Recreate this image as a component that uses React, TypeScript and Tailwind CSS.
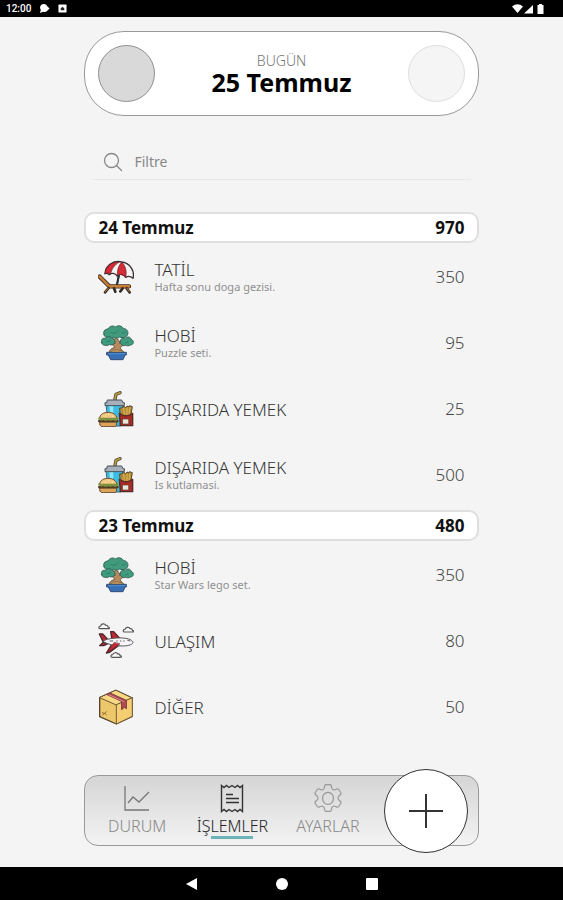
import React, { useState } from "react";

type IconName = "beach" | "bonsai" | "food" | "plane" | "box";

function BeachIcon() {
  return (
    <svg viewBox="0 0 108 108" className="size-9" strokeLinejoin="round" strokeLinecap="round" aria-hidden="true">
      <path d="M71 12 57 76" stroke="#263040" strokeWidth="5" />
      <path d="M21 44C22 18 48 3 72 9c24 3 39 27 33 49-8-7-15-8-22-3-6-9-16-12-25-4-7-9-17-10-24-4-6-5-10-5-13-3Z" fill="#f3f3f4" stroke="#3a3034" strokeWidth="4" />
      <path d="M21 44C22 22 42 8 64 9 50 17 40 31 38 45c-7-4-12-4-17-1Z" fill="#d62b35" stroke="#59222a" strokeWidth="2" />
      <path d="M58 51C57 32 62 18 72 9c11 13 15 28 11 46-6-9-16-12-25-4Z" fill="#d62b35" stroke="#59222a" strokeWidth="2" />
      <path d="M62 52 57 77" stroke="#26303a" strokeWidth="6" />
      <path d="M5 53 34 82h59" fill="none" stroke="#402c20" strokeWidth="13" />
      <path d="M5 53 34 82h59" fill="none" stroke="#c87d35" strokeWidth="8" />
      <path d="m32 87-11 13m65-12 9 12M48 88l4 10m22-10-7 9" fill="none" stroke="#352a22" strokeWidth="8" />
      <path d="m32 87-10 11m65-10 7 9" fill="none" stroke="#c87d35" strokeWidth="3" />
    </svg>
  );
}

function BonsaiIcon() {
  return (
    <svg viewBox="0 0 108 108" className="size-9" strokeLinejoin="round" strokeLinecap="round" aria-hidden="true">
      <path d="M33 43c1 16 14 14 17 24-11 4-18 10-16 18h43c0-8-11-12-10-17 4-7 15-8 20-17l-7-4c-5 6-10 6-15 9 0-8-4-12-9-16l-9 3 5 12c-6-2-8-6-10-13Z" fill="#b8895d" stroke="#66564c" strokeWidth="3" />
      <path d="M36 85c5-13 14-9 20-12 9 5 21 2 25 12Z" fill="#c99b58" stroke="#735d3f" strokeWidth="2" />
      <path d="M18 28c-4-11 6-17 13-16 2-8 14-12 21-6 8-6 21-4 24 5 14-1 18 16 9 23-6 6-16 4-20 2-6 5-13 4-17 0-7 5-15 5-18 0-5 3-12-1-12-8Z" fill="#3f9b7c" stroke="#37645a" strokeWidth="3" />
      <path d="M11 53c-4-9 5-16 11-12 4-8 16-8 20-1 9 0 13 14 4 18-6 4-10 0-13 1-6 4-22 3-22-6ZM67 50c0-10 9-14 14-9 5-8 17-6 18 2 10 3 9 17-2 17-5 4-10 2-14 1-8 3-16-2-16-11Z" fill="#3f9b7c" stroke="#37645a" strokeWidth="3" />
      <path d="M40 23c8 5 15 0 20-5m12 6c5 1 9-1 11-5M27 50c5 1 9-1 10-4m46 8c4 0 6-2 7-4" fill="none" stroke="#327c67" strokeWidth="3" />
      <path d="M27 82h58v8h-4l-6 14H38l-7-14h-4Z" fill="#3570b5" stroke="#344e76" strokeWidth="3" />
      <path d="M32 86h49" stroke="#5591cc" strokeWidth="3" />
    </svg>
  );
}

function FoodIcon() {
  return (
    <svg viewBox="0 0 108 108" className="size-9" strokeLinejoin="round" strokeLinecap="round" aria-hidden="true">
      <path d="m51 25 3-15 12-5" fill="none" stroke="#534b32" strokeWidth="10" />
      <path d="m51 25 3-15 12-5" fill="none" stroke="#bf9b45" strokeWidth="5" />
      <path d="M25 40h51l-8 65H33Z" fill="#39bde5" stroke="#356375" strokeWidth="3" />
      <path d="M34 43h12v26H36Z" fill="#8fe5f5" />
      <path d="M29 27h42l4 8h4v9H21v-9h4Z" fill="#a7b0ba" stroke="#485158" strokeWidth="3" />
      <path d="M66 51h6l2-4h6l3 4 4-6 6 3 1-4 9 3-5 29H68Z" fill="#b58a38" stroke="#59462c" strokeWidth="3" />
      <path d="m77 52 2 19m8-20v20m9-21-3 20" stroke="#e0b857" strokeWidth="3" />
      <path d="M64 67c12 10 28 10 40 0v37H67Z" fill="#a92b23" stroke="#542c28" strokeWidth="4" />
      <path d="M74 84h18v15H74Z" fill="#e8e7dc" stroke="#654035" strokeWidth="2" />
      <path d="M5 81c0-23 51-23 51 0Z" fill="#f2c780" stroke="#654b31" strokeWidth="3" />
      <path d="M5 93h51v6c0 8-7 8-11 8H16c-6 0-11-2-11-8Z" fill="#dba45a" stroke="#654b31" strokeWidth="3" />
      <path d="M4 90h54" stroke="#563b24" strokeWidth="8" />
      <path d="M4 82c7 8 9-1 15 2 7 6 8-2 14 0 7 5 9-2 14 0 4 4 8 1 11-2" fill="none" stroke="#7b973f" strokeWidth="7" />
      <path d="M22 75h1m9-4h1m10 5h1" stroke="#fff3c8" strokeWidth="3" />
    </svg>
  );
}

function PlaneIcon() {
  return (
    <svg viewBox="0 0 108 108" className="size-9" strokeLinejoin="round" strokeLinecap="round" aria-hidden="true">
      <g fill="#f8f8f8" stroke="#555" strokeWidth="3.5">
        <path d="M7 17c-6 0-6-8 1-8 1-7 12-9 15-2 6-1 7 3 7 5 6 1 6 5 1 5Z" />
        <path d="M80 27c-6 0-6-8 1-8 2-7 13-8 15-2 6-1 7 3 7 5 6 1 6 5 1 5Z" />
        <path d="M43 103c-6 0-6-8 1-8 2-7 13-8 15-2 6-1 7 3 7 5 6 1 6 5 1 5Z" />
      </g>
      <path d="M42 50 38 26h9l24 26ZM43 62 25 90l10-2 32-24Z" fill="#bf2731" stroke="#48262a" strokeWidth="4" />
      <path d="M15 55 4 33h10l16 17ZM16 58 5 68h12l14-7Z" fill="#bf2731" stroke="#48262a" strokeWidth="4" />
      <path d="M14 55c13-11 61-13 78-7 7 2 12 6 13 10-2 9-20 11-33 11-23 0-43-5-58-14Z" fill="#f7f7f7" stroke="#55555a" strokeWidth="3" />
      <path d="M48 59 28 88l37-25Z" fill="#cc2834" stroke="#68292f" strokeWidth="2" />
      <path d="M36 54h8m12 0h2m9 0h2m8 0h2m10-2 7 2" stroke="#59616c" strokeWidth="3" />
    </svg>
  );
}

function BoxIcon() {
  return (
    <svg viewBox="0 0 108 108" className="size-9" strokeLinejoin="round" strokeLinecap="round" aria-hidden="true">
      <path d="M5 26 54 4l49 23v55l-48 23L5 83Z" fill="#edc76b" stroke="#55432d" strokeWidth="4" />
      <path d="m5 26 50 22 48-21L54 4Z" fill="#f7d984" stroke="#6b5334" strokeWidth="3" />
      <path d="M55 48v57l48-23V27Z" fill="#f4ce70" stroke="#78603b" strokeWidth="3" />
      <path d="m27 16 9-4 49 22v25l-6-4-8 7V38Z" fill="#b94a53" stroke="#753b40" strokeWidth="3" />
      <path d="m32 17 46 21" stroke="#db858a" strokeWidth="3" />
      <path d="m13 71 12 5m-11 2 11-10" stroke="#986e38" strokeWidth="3" />
    </svg>
  );
}

const icons: Record<IconName, () => React.JSX.Element> = {
  beach: BeachIcon,
  bonsai: BonsaiIcon,
  food: FoodIcon,
  plane: PlaneIcon,
  box: BoxIcon,
};

interface Entry {
  icon: IconName;
  title: string;
  note?: string;
  amount: number;
}

const days: { date: string; total: number; entries: Entry[] }[] = [
  {
    date: "24 Temmuz",
    total: 970,
    entries: [
      { icon: "beach", title: "TATİL", note: "Hafta sonu doga gezisi.", amount: 350 },
      { icon: "bonsai", title: "HOBİ", note: "Puzzle seti.", amount: 95 },
      { icon: "food", title: "DIŞARIDA YEMEK", amount: 25 },
      { icon: "food", title: "DIŞARIDA YEMEK", note: "Is kutlamasi.", amount: 500 },
    ],
  },
  {
    date: "23 Temmuz",
    total: 480,
    entries: [
      { icon: "bonsai", title: "HOBİ", note: "Star Wars lego set.", amount: 350 },
      { icon: "plane", title: "ULAŞIM", amount: 80 },
      { icon: "box", title: "DİĞER", amount: 50 },
    ],
  },
];

function StatusBar() {
  return (
    <div className="flex h-[17px] items-center justify-between bg-black pr-[18px] pl-1.5 text-white">
      <div className="flex items-center gap-2">
        <span className="font-[Roboto,sans-serif] text-[10px] leading-4 font-medium">12:00</span>
        <svg viewBox="0 0 12 12" className="size-[11px]" aria-hidden="true">
          <path d="M5 1a4 4 0 0 1 4 2.500L11.500 6 9 8.500A4.300 4.300 0 0 1 4.500 9.500L1 11l1-3.500A4 4 0 0 1 5 1Z" fill="#fff" />
        </svg>
        <svg viewBox="0 0 10 10" className="size-[9px]" aria-hidden="true">
          <rect x="0.500" y="0.500" width="9" height="9" rx="1" fill="#fff" />
          <path d="M3 7V5l2-2 2 2v2Z" fill="#222" />
        </svg>
      </div>
      <svg viewBox="0 0 33 12" className="h-3 w-[33px]" fill="#fff" aria-hidden="true">
        <path d="M0 3.500Q5.500-1 11 3.500L5.500 10ZM12 10.500 21 2v8.500ZM25.500 2h1.500V1h3v1h1.500v9h-6Z" />
      </svg>
    </div>
  );
}

function TabIcon({ name }: { name: string }) {
  if (name === "DURUM")
    return (
      <svg viewBox="0 0 28 30" className="h-[30px] w-7" fill="none" stroke="#777" strokeWidth="1.300" aria-hidden="true">
        <path d="M2 2v24h24M5 19l5-6 6 5L26 8" />
      </svg>
    );
  if (name === "İŞLEMLER")
    return (
      <svg viewBox="0 0 28 30" className="h-[30px] w-7" fill="none" stroke="#333" strokeWidth="1.400" aria-hidden="true">
        <path d="M3.500 1.500 6 3.500 8.500 1.500 11 3.500 14 1.500 17 3.500 19.500 1.500 22 3.500 24.500 1.500V27.500L22 25.500 19.500 27.500 17 25.500 14 27.500 11 25.500 8.500 27.500 6 25.500 3.500 27.500Z" />
        <path d="M8 10.500h7M8 14.500h13M8 18.500h13" />
      </svg>
    );
  return (
    <svg viewBox="0 0 28 30" className="h-[30px] w-7" fill="none" stroke="#999" strokeWidth="1.200" strokeLinejoin="round" aria-hidden="true">
      <path d="M12 .6h4q1 0 1.200 1l.6 2.600q.3 1 1.300 1.500.9.500 1.800.1l2.300-.9q1-.3 1.600.6l2 3.300q.5.900-.2 1.700l-1.900 1.800q-.7.700-.7 1.700t.7 1.700l1.900 1.800q.7.800.2 1.700l-2 3.300q-.6.900-1.600.6l-2.300-.9q-.9-.4-1.800.1-1 .5-1.300 1.500l-.6 2.600q-.2 1-1.200 1h-4q-1 0-1.200-1l-.6-2.600q-.3-1-1.300-1.500-.9-.500-1.800-.1l-2.300.9q-1 .3-1.600-.6l-2-3.300q-.5-.900.2-1.700l1.900-1.800q.7-.700.7-1.700t-.7-1.700l-1.900-1.800q-.7-.800-.2-1.700l2-3.300q.6-.900 1.600-.6l2.300.9q.9.400 1.800-.1 1-.500 1.300-1.500l.6-2.600q.2-1 1.200-1Z" />
      <ellipse cx="14" cy="14.300" rx="5.500" ry="6" />
    </svg>
  );
}

const tabs = ["DURUM", "İŞLEMLER", "AYARLAR"];

export default function App() {
  const [filter, setFilter] = useState("");
  return (
    <div className="flex min-h-screen flex-col bg-[#f4f4f4] font-['Noto_Sans','Open_Sans',sans-serif] text-black">
      <StatusBar />
      <div className="mx-auto flex w-[70%] flex-1 flex-col pt-[14px]">
        <header className="flex items-center justify-between rounded-[40px] border border-[#999] bg-white px-[13px] py-[13px]">
          <button aria-label="Önceki gün" className="size-[57px] rounded-full border border-[#909090] bg-[#d9d9d9]" />
          <div className="text-center">
            <p className="text-sm leading-4 font-light text-[#777]">BUGÜN</p>
            <h1 className="text-[25px] leading-[26px] font-bold">25 Temmuz</h1>
          </div>
          <button aria-label="Sonraki gün" className="size-[57px] rounded-full border border-[#dedede] bg-[#f5f5f5]" />
        </header>

        <label className="mx-2 mt-7 flex h-9 items-center gap-[11px] border-b border-[#e8e8e8] px-[11px] text-[#888]">
          <svg viewBox="0 0 20 20" className="size-5" fill="none" stroke="#888" strokeWidth="1.300" strokeLinecap="round" aria-hidden="true">
            <circle cx="8.500" cy="8.500" r="7" />
            <path d="m13.500 13.500 5 5" />
          </svg>
          <input
            aria-label="Filtre"
            placeholder="Filtre"
            value={filter}
            onChange={(e) => setFilter(e.target.value)}
            className="min-w-0 flex-1 bg-transparent text-sm outline-none placeholder:text-[#888]"
          />
        </label>

        <main className="mt-8">
          {days.map((day) => (
            <section key={day.date} className="mb-[2px]">
              <h2 className="mb-px flex h-[31px] items-center justify-between rounded-[10px] border-2 border-[#dfdfdf] bg-white px-3 text-[17px] leading-6 font-bold text-[#111]">
                <span>{day.date}</span>
                <span>{day.total}</span>
              </h2>
              <ul>
                {day.entries.map((entry, i) => {
                  const Icon = icons[entry.icon];
                  return (
                    <li key={i} className="flex h-[66px] items-center px-[14px]">
                      <Icon />
                      <div className="ml-5 flex-1 pt-0.5">
                        <p className="text-[17px] leading-[18px] font-light text-[#333]">{entry.title}</p>
                        {entry.note && <p className="text-[11px] leading-4 text-[#909090]">{entry.note}</p>}
                      </div>
                      <span className="text-[17px] leading-6 font-light text-[#444]">{entry.amount}</span>
                    </li>
                  );
                })}
              </ul>
            </section>
          ))}
        </main>

        <nav className="mt-auto mb-[21px] flex h-[71px] items-center rounded-[14px] border border-[#999] bg-linear-to-b from-[#d5d5d5] to-[#f3f3f3] pr-2.5 pl-1">
          {tabs.map((tab) => {
            const active = tab === "İŞLEMLER";
            return (
              <button key={tab} className="flex h-full flex-1 flex-col items-center pt-2">
                <TabIcon name={tab} />
                <span className={active ? "text-base leading-6 font-light text-[#222]" : "text-base leading-6 font-light text-[#888]"}>{tab}</span>
                {active && <span className="-mt-0.5 h-[3px] w-[42px] bg-[#6bb5ba]" />}
              </button>
            );
          })}
          <button aria-label="Ekle" className="ml-2 flex size-[84px] shrink-0 items-center justify-center rounded-full border border-[#333] bg-white">
            <svg viewBox="0 0 34 34" className="size-[34px]" stroke="#333" strokeWidth="2" aria-hidden="true">
              <path d="M17 0v34M0 17h34" />
            </svg>
          </button>
        </nav>
      </div>
      <footer className="flex h-[33px] items-center justify-center gap-[78px] bg-black">
        <button aria-label="Geri">
          <svg viewBox="0 0 12 12" className="size-3" fill="#fff" aria-hidden="true"><path d="M0 6 11 0v12Z" /></svg>
        </button>
        <button aria-label="Ana ekran" className="size-3 rounded-full bg-white" />
        <button aria-label="Son uygulamalar" className="size-3 rounded-[1px] bg-white" />
      </footer>
    </div>
  );
}
